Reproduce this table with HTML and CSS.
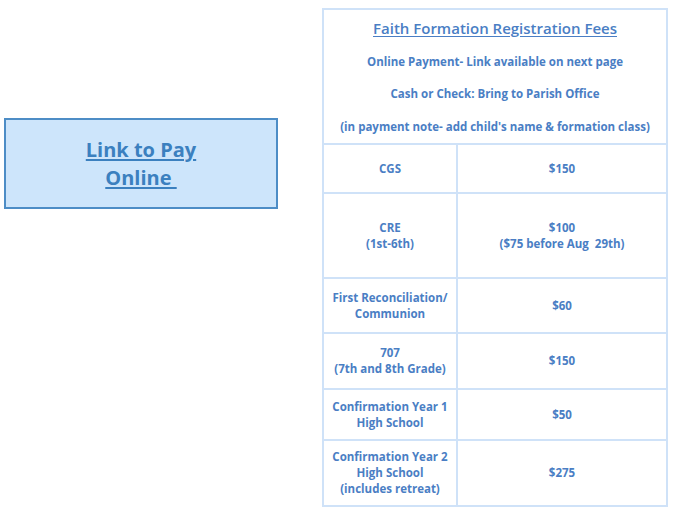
FILE: index.html
```html
<!DOCTYPE html>
<html>
<head>
<meta charset="utf-8">
<link rel="stylesheet" href="styles.css">
</head>
<body>
<div class="page">
  <div class="paybox"><a class="paylink" href="#">Link to Pay<br>Online&nbsp;</a></div>
  <div class="fees">
    <div class="head">
      <div class="title">Faith Formation Registration Fees</div>
      <div class="note">Online Payment- Link available on next page</div>
      <div class="note">Cash or Check: Bring to Parish Office</div>
      <div class="note">(in payment note- add child's name &amp; formation class)</div>
    </div>
    <div class="cell">CGS</div><div class="cell price">$150</div>
    <div class="cell">CRE<br>(1st-6th)</div><div class="cell price">$100<br>($75 before Aug&nbsp; 29th)</div>
    <div class="cell">First Reconciliation/<br>Communion</div><div class="cell price">$60</div>
    <div class="cell">707<br>(7th and 8th Grade)</div><div class="cell price">$150</div>
    <div class="cell">Confirmation Year 1<br>High School</div><div class="cell price">$50</div>
    <div class="cell">Confirmation Year 2<br>High School<br>(includes retreat)</div><div class="cell price">$275</div>
  </div>
</div>
</body>
</html>
```
FILE: styles.css
```css
html, body { margin: 0; padding: 0; background: #fff; }
body { font-family: "Open Sans", "Noto Sans", sans-serif; }
.page {
  display: flex;
  align-items: flex-start;
  padding: 8px 0 0 4px;
  gap: 44px;
}
.paybox {
  margin-top: 110px;
  width: 270px;
  height: 87px;
  background: #cde5fb;
  border: 2px solid #4d8dc6;
  display: flex;
  align-items: center;
  justify-content: center;
  text-align: center;
}
.paylink {
  color: #3b80bf;
  font-size: 20px;
  font-weight: 700;
  line-height: 28px;
  text-decoration: underline;
  text-underline-offset: 2px;
}
.fees {
  display: grid;
  grid-template-columns: 134px 210px;
  grid-template-rows: 135px 49px 85px 55px 56px 51px 66px;
  border-top: 2px solid #cfe2f8;
  border-left: 2px solid #cfe2f8;
  color: #4a7ec4;
  font-weight: 700;
  font-size: 11.5px;
  text-align: center;
}
.head {
  grid-column: 1 / 3;
  border-right: 2px solid #cfe2f8;
  border-bottom: 2px solid #cfe2f8;
  padding-top: 8px;
}
.title {
  font-size: 15px;
  font-weight: 600;
  text-decoration: underline;
  text-underline-offset: 2px;
  line-height: 20px;
}
.note {
  line-height: 16px;
  margin-top: 16px;
}
.note:nth-child(2) { margin-top: 16px; }
.note:nth-child(4) { margin-top: 17px; }
.cell {
  border-right: 2px solid #cfe2f8;
  border-bottom: 2px solid #cfe2f8;
  display: flex;
  align-items: center;
  justify-content: center;
  line-height: 16px;
}
```
